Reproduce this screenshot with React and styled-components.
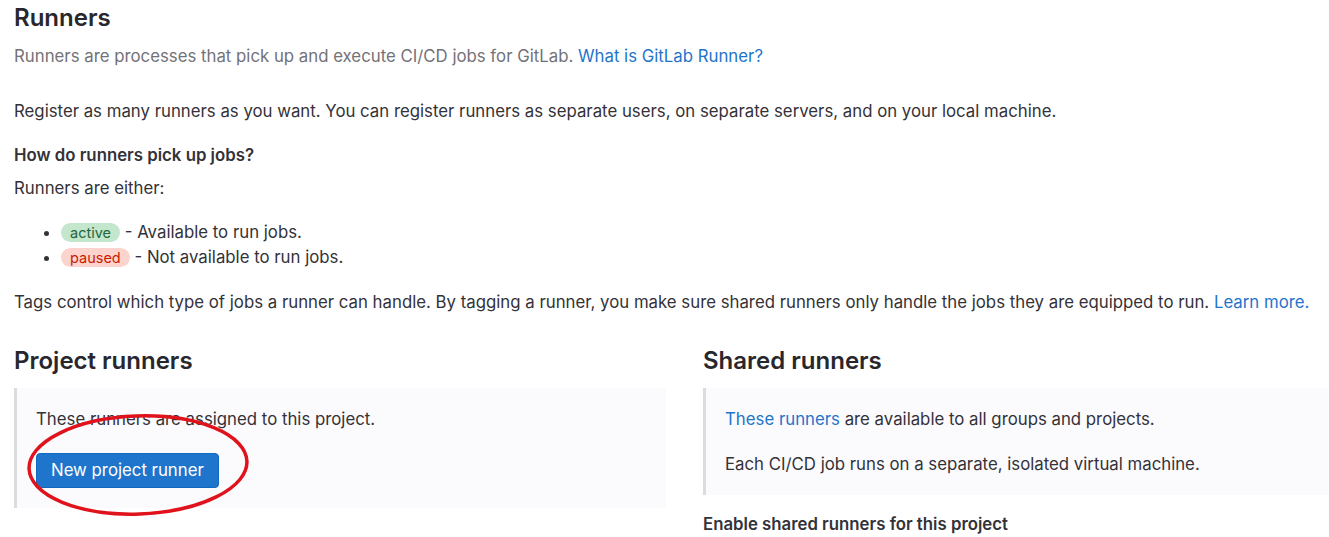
import React from "react";
import styled, { createGlobalStyle } from "styled-components";

const GlobalStyle = createGlobalStyle`
  html, body {
    margin: 0;
    padding: 0;
    background: #ffffff;
    overflow: hidden;
  }
  body {
    font-family: Inter, "Noto Sans", "Liberation Sans", sans-serif;
    color: #333238;
  }
`;

function Badge({ variant, children }) {
  return <Pill variant={variant}>{children}</Pill>;
}

function App() {
  return (
    <>
      <GlobalStyle />
      <Page>
        <Title>Runners</Title>
        <Lead>
          Runners are processes that pick up and execute CI/CD jobs for GitLab.{" "}
          <Link>What is GitLab Runner?</Link>
        </Lead>
        <Para top={31}>
          Register as many runners as you want. You can register runners as
          separate users, on separate servers, and on your local machine.
        </Para>
        <Question>How do runners pick up jobs?</Question>
        <Para top={9}>Runners are either:</Para>
        <List>
          <li>
            <Badge variant="active">active</Badge> - Available to run jobs.
          </li>
          <li>
            <Badge variant="paused">paused</Badge> - Not available to run jobs.
          </li>
        </List>
        <Para top={20}>
          Tags control which type of jobs a runner can handle. By tagging a
          runner, you make sure shared runners only handle the jobs they are
          equipped to run. <Link>Learn more.</Link>
        </Para>

        <Columns>
          <Column>
            <SectionTitle>Project runners</SectionTitle>
            <Panel>
              <PanelText>These runners are assigned to this project.</PanelText>
              <ButtonWrap>
                <PrimaryButton>New project runner</PrimaryButton>
                <Circle viewBox="0 0 226 106" aria-hidden="true">
                  <ellipse
                    cx="113"
                    cy="53"
                    rx="109"
                    ry="49"
                    transform="rotate(-2 113 53)"
                    fill="none"
                    stroke="#e0121b"
                    strokeWidth="3.5"
                  />
                </Circle>
              </ButtonWrap>
            </Panel>
          </Column>
          <Column>
            <SectionTitle>Shared runners</SectionTitle>
            <Panel wide>
              <PanelText>
                <Link>These runners</Link> are available to all groups and
                projects.
              </PanelText>
              <PanelText top={21}>
                Each CI/CD job runs on a separate, isolated virtual machine.
              </PanelText>
            </Panel>
            <Question top={17}>Enable shared runners for this project</Question>
          </Column>
        </Columns>
      </Page>
    </>
  );
}

export default App;

const Page = styled.div`
  padding: 4px 14px 0 14px;
  width: 1400px;
  font-size: 16.8px;
  line-height: 24px;
`;

const Title = styled.h1`
  margin: 0;
  font-size: 24px;
  line-height: 28px;
  font-weight: 600;
  color: #28272d;
`;

const Lead = styled.p`
  margin: 12px 0 0 0;
  color: #737278;
`;

const Link = styled.a`
  color: #1f75cb;
  text-decoration: none;
  cursor: pointer;
`;

const Para = styled.p`
  margin: ${(p) => p.top || 0}px 0 0 0;
  width: 1320px;
`;

const Question = styled.h5`
  margin: ${(p) => (p.top === undefined ? 20 : p.top)}px 0 0 0;
  font-size: 16.8px;
  line-height: 24px;
  font-weight: 600;
  color: #333238;
`;

const List = styled.ul`
  margin: 20px 0 0 0;
  padding-left: 47px;
  li {
    line-height: 25px;
  }
`;

const Pill = styled.span`
  display: inline-block;
  padding: 0 9px;
  border-radius: 12px;
  font-size: 14.5px;
  line-height: 19px;
  background: ${(p) => (p.variant === "active" ? "#c3e6cd" : "#fdd4cd")};
  color: ${(p) => (p.variant === "active" ? "#24663b" : "#c91c00")};
`;

const Columns = styled.div`
  display: grid;
  grid-template-columns: 652px 652px;
  column-gap: 37px;
  margin-top: 32px;
`;

const Column = styled.div`
  display: flex;
  flex-direction: column;
`;

const SectionTitle = styled.h2`
  margin: 0;
  font-size: 24px;
  line-height: 30px;
  font-weight: 600;
  color: #28272d;
`;

const Panel = styled.div`
  margin-top: 12px;
  background: #fbfafd;
  border-left: 3px solid #dcdcde;
  padding: 19px 21px ${(p) => (p.wide ? 19 : 20)}px 19px;
  width: ${(p) => (p.wide ? "700px" : "auto")};
  box-sizing: border-box;
`;

const PanelText = styled.p`
  margin: ${(p) => p.top || 0}px 0 0 0;
  color: #333238;
`;

const ButtonWrap = styled.div`
  position: relative;
  display: flex;
  width: max-content;
  margin-top: 22px;
`;

const PrimaryButton = styled.button`
  font-family: inherit;
  font-size: 16.8px;
  line-height: 21px;
  padding: 6px 14px;
  color: #ffffff;
  background: #1f75cb;
  border: 1px solid #1068bf;
  border-radius: 4px;
  cursor: pointer;
`;

const Circle = styled.svg`
  position: absolute;
  left: -11px;
  top: -41px;
  width: 226px;
  height: 106px;
  overflow: visible;
  pointer-events: none;
`;
